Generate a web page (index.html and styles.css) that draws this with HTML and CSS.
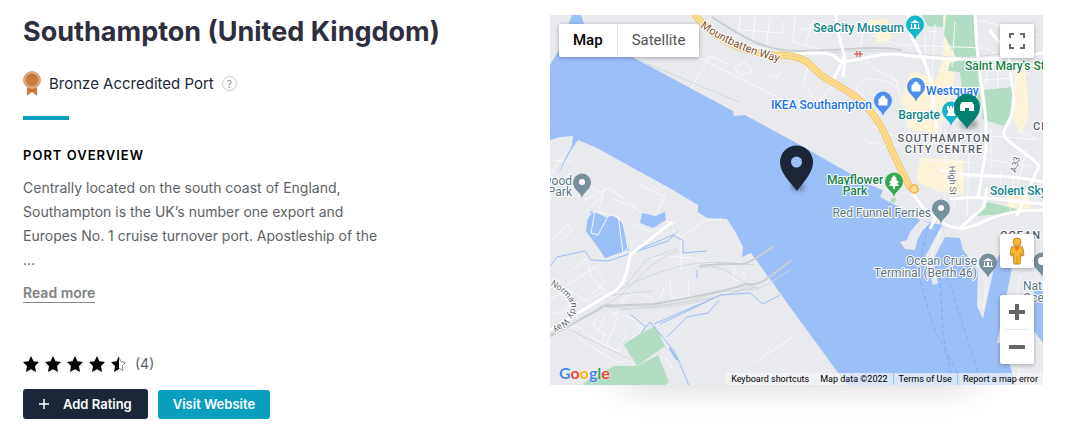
FILE: index.html
```html
<!DOCTYPE html>
<html lang="en">
  <head>
    <meta charset="UTF-8" />
    <meta name="viewport" content="width=device-width, initial-scale=1.0" />
    <title>Southampton (United Kingdom)</title>
    <link rel="stylesheet" href="styles.css">
  </head>
  <body>
    <main class="port">
      <section class="port-info">
        <h1>Southampton (United Kingdom)</h1>
        <div class="accreditation">
          <svg class="medal" viewBox="0 0 18 25" aria-hidden="true">
            <path d="M4 15h10v10l-5-4-5 4z" fill="#cd7f3f" />
            <path d="M4 17c3 2 7 2 10 0v2c-3 1-7 1-10 0z" fill="#b86a30" />
            <circle cx="9" cy="9" r="9" fill="#e0a578" />
            <circle cx="9" cy="9" r="6" fill="#cc7b3c" />
            <path d="M3 9a6 6 0 0 1 12 0a6.500 6.500 0 0 0-12 0" fill="#ba6d34" />
          </svg>
          <span>Bronze Accredited Port</span>
          <button type="button" class="help" aria-label="About accreditation">?</button>
        </div>
        <div class="divider"></div>
        <h2>Port overview</h2>
        <p class="overview">Centrally located on the south coast of England, Southampton is the UK’s number one export and Europes No. 1 cruise turnover port. Apostleship of the ...</p>
        <a class="read-more" href="#">Read more</a>

        <div class="rating">
          <svg class="star" viewBox="0 0 16 16"><path id="star" d="M8 0l2.500 5.200 5.500.8-4 4 1 6-5-2.800L3 16l1-6-4-4 5.500-.8z" /></svg>
          <svg class="star" viewBox="0 0 16 16"><use href="#star" /></svg>
          <svg class="star" viewBox="0 0 16 16"><use href="#star" /></svg>
          <svg class="star" viewBox="0 0 16 16"><use href="#star" /></svg>
          <svg class="star" viewBox="0 0 16 16">
            <path d="M8 0v13.200L3 16l1-6-4-4 5.500-.8z" />
            <path d="M8 1.500l2 4.300 4.600.8-3.400 3.200.8 4.700L8 12.300" fill="none" stroke="#888" />
          </svg>
          <span>(4)</span>
        </div>
        <div class="actions">
          <button type="button" class="btn btn-dark">
            <svg class="plus" viewBox="0 0 10 10" aria-hidden="true"><path d="M5 0v10M0 5h10" stroke="#fff" stroke-width="1.500" /></svg>
            Add Rating
          </button>
          <a class="btn btn-teal" href="#">Visit Website</a>
        </div>
      </section>

      <section class="map" aria-label="Map">
        <svg class="map-canvas" viewBox="550 15 493 370" preserveAspectRatio="xMidYMid slice">
          <defs>
            <path id="pin" d="M0 15C-1 9-9 7-9-0.500A9 9 0 0 1 9-0.500C9 7 1 9 0 15z" />
            <path id="bag" d="M-4-2h8v6h-8zM-2-2v-1a2 2 0 0 1 4 0v1" />
            <path id="museum" d="M-5-2L0-5 5-2zM-4-1h1v4h-1zM-1-1H1V3H-1zM3-1h1v4H3zM-5 3H5v1H-5z" />
            <path id="mountbatten" d="M700 27C725 44 746 54 790 65" />
            <path id="normandy" d="M550 285Q568 295 571 305Q572 316 552 329" />
          </defs>

          <rect class="land" x="550" y="15" width="493" height="370" />

          <!-- beige blocks -->
          <g class="block">
            <path d="M944 15h10l2 44-6 50-14 24-26-3-8-34 9-26 25 10 7-20z" />
            <path d="M868 20l20-1 4 20-14 4zM920 158l43 2 1 35-28-4-19-10z" />
            <path d="M1007 62l18 4 4 50-8 18-8-16 2-40zM1008 196l20-4 3 19-24-2z" />
          </g>

          <!-- parks -->
          <g class="park">
            <path d="M922 15h21v12l-15-1zM946 15h29l2 48 4 43-18-7-3-27-12-1 2-8 8-2-14-26z" />
            <path d="M984 90l29-3-3 28-6 11-22-7zM987 202l30 7-2 4-38 3 8-13z" />
            <path d="M623 343l32-17 10 20-28 20z" />
            <path d="M637 366l21-11 11 27-4 3h-82l3-4 28-15z" />
          </g>

          <!-- minor streets -->
          <g class="street">
            <path d="M738 37l3-22M742 30l40 3 2-12M740 43l43 10M755 15l-2 26M770 18l-4 28M640 58l25-20 50 28 80 40M690 90l20-34 18 8M735 67l10-5 8 9-14 5zM770 74l6 4 6-8M795 15l-2 27 40 11M800 30l25-5 22 8M805 46l8-26 38 14M810 63l-7 20 20 28M853 20l20 16 30 10M866 17l-6 30 8 18M835 82l-18 22 30 5M864 96l-8-7 11-11 21 4 12 7M887 70l10 12 10 40 8 27M870 66l28 16M868 92l12 6-4 20M890 28l50 4M925 34l1 40M935 24l-5 100M948 60l-8 76M955 22l-3 45M905 45l78 3M978 20l60 15M981 45l50 30M984 80l28-2M990 56l-5 30M998 60v27M982 135l55 5M991 128v40M925 142l66 10M920 160l54 3M923 175l50 3M945 128v88M957 140l-3 67M969 150l-2 66M978 158l52 8M1018 60l-4 40M1012 60l31 7M1017 130l26 12M1001 170l-2 28M1014 170l-4 40M1026 150l-14 58M862 138l10 6 9-2M878 151l10-8 12 3M870 125l27 12" />
            <path d="M550 175l14-20 10-10M553 160l20 2M563 193l20-13 20 15-18 17M585 200l23-12 30 20M605 187l-7 24 25 10M612 199l20 7 17 12M640 185l25 12-10 18 18 10M630 222l20 10 25-9M550 241l17-16 5 6-12 10M571 271l15-12 6 18M567 285l28-18 10 15-19 19-20-13M590 300l14-9-10-12" />
            <path d="M550 298l13-5 7 12-11 9-9-2M606 315l-8 15 7 4-4 10 18 7 8-19M608 310l10 7-12 28M614 312l22 8 5 12-17 12M600 333l-7-8 4-8M573 326c-6 6 17 20 42 35 7 4 15-2 10-5l-35-19c-8-4-9-12-17-11M665 358l9 12M755 363l38-27M670 278l1 20 18-1-1-18M660 300l4-12M622 300c12-12 28-3 31 0 5 14-33 9-31 0M736 268l-3 10c12 9 16-2 7-8M650 259l18-3 22 2 25 6" />
          </g>

          <!-- water -->
          <g class="water">
            <path d="M572 15L581 15L585 27L580 45L632 57L653 68L733 111L734 116L745 115L800 145L870 185L883 190L880 197L910 213L920 220L942 225L945 237L960 238L963 250L978 270L977 306L983 319L995 263L1001 252L1012 267L1007 293L997 343L1003 343L1016 385L847 385L790 307L780 293L751 253L742 257L743 247L736 233L727 219L707 218L698 212L698 205L673 190L597 148L578 140L571 150L557 176L562 165L572 145L573 136L560 137L550 140V65L559 50z" />
            <path d="M591 211l8 3 6 3 8-1 8 5 4 9 4 20-24 8-8-12-11-15 1-9zM642 213l13 3 10-4 1 8-13 8-13-5zM670 347l10 14-4-1-7-11z" />
            <path d="M1034 285h9v58l-9-12z" />
          </g>

          <!-- railways -->
          <g class="rail">
            <path d="M590 28l17 15M645 63l94 39M790 53c45 2 70-5 110-1 45 4 55 8 90 3l53-2M550 337l60-35M600 307c30-10 40-43 78-56M604 304c40 5 75 2 110-11 30-5 38 0 54-9l22-14M601 306c55 8 115-6 150-20M620 310c60-5 110-15 135-23M570 330l60 29M550 335c30-25 75-50 100-59 45-18 70-14 105-11M700 268c30-6 35 15 58 20M612 295l40-4M626 285l20-25 32-12" />
            <path class="rail-wide" d="M712 17c28 18 52 35 88 34 45 0 70-6 102-1M699 266c22-3 30-2 45-2q9-3 30-18M604 306l50-2q70-12 93-20c15 3 25-10 45-24M550 336l53-29" />
          </g>

          <g class="stream">
            <path d="M550 266l7-9 28-6 6 9 17 1 60-20 10-10M633 252l40-17 10 6v12l24-2M697 270v8M631 315l15 12-5 6 9-11 25 30 15 36 6 6 1 14M660 324l40-19 20-10 30-2 13 11 17-9M654 324l60-26M667 337l20-20 21-4 11-13" />
          </g>
          <path class="tile-seam" d="M550 120.500h200M815 337.500h182" />
          <path class="ferry" d="M928 226l-10 45 15 55 30 59M940 275l3 60 10 50M947 275l35 110" />

          <!-- piers -->
          <g class="land">
            <path d="M920 220l-10 12-3 8-7 2 5 7 10 1 2-9 5-10 8-8zM942 225l-17 32 8 28 5-2-6-21 13-25z" />
          </g>
          <path class="green-patch" d="M892 198l4 0-1 5-5-1z" />

          <!-- main roads -->
          <g class="road">
            <path d="M836 15c2 35 12 30 7 62M775 54c25 1 58-6 63 6 10 6 40-10 65-5 50 6 100 5 140-2M909 15c-3 15 5 25 14 44 10 20 10 45 14 70M975 15c2 70 13 80 11 135l-8 47M990 30c8 15 20 15 20 35s8 30 1 52l-7 14c-4 10 30 25 35 35l-22 50M940 170c30 9 70 3 103 12M950 199c40-4 60 3 93 5M911 191l12 17 22 16c30 15 35-15 98-14M960 228l24-21 3-20M936 217l-6 12M550 330l58-35c17-7 19-22 22-40l42-33M843 60l-10 21" />
          </g>
          <g class="street"><path d="M672 230l10 7 22-16 18-2M681 240v30M586 218l9-7-4 22 7 2 10-19M618 215l5 38 5-5-5-25-10-10M941 230l-10 26M988 270l-5 40M1020 275l-4 30 12 50M1014 345l8 40M1008 246l35 20" /></g>

          <!-- A33 -->
          <path class="highway-edge" d="M693 12c18 26 50 41 80 43 12 1 22-1 34 7 9 8 12 13 25 20 18 11 36 18 53 52 8 21 17 37 26 55" />
          <path class="highway" d="M693 12c18 26 50 41 80 43 12 1 22-1 34 7 9 8 12 13 25 20 18 11 36 18 53 52 8 21 17 37 26 55" />
          <path class="highway-line" d="M693 12c18 26 50 41 80 43 12 1 22-1 34 7 9 8 12 13 25 20 18 11 36 18 53 52 8 21 17 37 26 55" />
          <circle class="highway-ring" cx="914" cy="189" r="4" />
          <path class="station" d="M854 54h9M857 51v6M860 51v6" />

          <g class="pin-slate"><use href="#pin" x="582" y="183" /><use href="#pin" x="941" y="209" /><use href="#pin" x="988" y="263" /><use href="#pin" x="1042" y="262" /></g>
          <g class="pin-aqua"><use href="#pin" x="915" y="25" /><use href="#pin" x="951" y="111" /></g>
          <g class="pin-blue"><use href="#pin" x="883" y="101" /><use href="#pin" x="916" y="87" /></g>
          <use class="pin-green" href="#pin" x="894" y="182" />
          <g fill="#fff">
            <circle cx="582" cy="182" r="3" /><circle cx="941" cy="208" r="3" /><circle cx="1042" cy="261" r="4" />
            <use href="#museum" x="988" y="263" /><use href="#museum" x="915" y="25" />
            <path d="M894 175l3 4h-1l3 4h-2l2 3h-4v3h-2v-3h-4l2-3h-2l3-4h-1z" />
            <path d="M947 106h2v2h1v-2h2v2h1v-2h2v4h-1v3l2 3h-10l2-3v-3h-1z" />
          </g>
          <g class="bag">
            <use href="#bag" x="883" y="101" /><use href="#bag" x="916" y="87" />
          </g>

          <g class="labels">
            <text class="brown"><textPath href="#mountbatten">Mountbatten Way</textPath></text>
            <text class="road-name"><textPath href="#normandy">Normandy Way</textPath></text>
            <text class="teal" x="904" y="32" text-anchor="end">SeaCity Museum</text>
            <text class="green" x="965" y="70">Saint Mary's St</text>
            <text class="blue" x="872" y="109" text-anchor="end">IKEA Southampton</text>
            <text class="blue" x="926" y="95">Westquay</text>
            <text class="teal" x="940" y="119" text-anchor="end">Bargate</text>
            <text class="area" x="944" y="142" text-anchor="middle">SOUTHAMPTON</text>
            <text class="area" x="944" y="153" text-anchor="middle">CITY CENTRE</text>
            <text class="area" x="1033" y="130">CH</text>
            <text class="area" x="1000" y="239">OCEAN</text>
            <text class="green" x="855" y="184" text-anchor="middle">Mayflower</text>
            <text class="green" x="855" y="195" text-anchor="middle">Park</text>
            <text class="slate" x="931" y="217" text-anchor="end">Red Funnel Ferries</text>
            <text class="slate" x="977" y="265" text-anchor="end">Ocean Cruise</text>
            <text class="slate" x="977" y="277" text-anchor="end">Terminal (Berth 46)</text>
            <text class="slate" x="572" y="185" text-anchor="end">wood</text>
            <text class="slate" x="572" y="196" text-anchor="end">Park</text>
            <text class="slate" x="1023" y="290">Nati</text>
            <text class="slate" x="1023" y="302">Oce</text>
            <text class="teal" x="990" y="195">Solent Sky</text>
            <text class="road-name" transform="translate(949 166) rotate(88)">High St</text>
            <text class="road-name" transform="translate(1016 173) rotate(-75)">A33</text>
          </g>

          <g class="marker-shadow">
            <ellipse cx="798" cy="187" rx="7" ry="4" /><ellipse cx="969" cy="124" rx="9" ry="5" />
          </g>
          <path fill="#00806f" d="M967 129c-2-6-13-11-13-22a13 13 0 0 1 26 0c0 11-11 16-13 22z" />
          <path fill="#fff" d="M960 111v-6l2-3h10l2 3v6h-5v-3h-4v3z" />
          <path fill="#1b2739" fill-rule="evenodd" d="M797 191c-4-6-17-17-17-29a16.500 16.500 0 0 1 33 0c0 12-12 23-16 29zM796.500 156.500a5.500 5.500 0 1 0 0 11a5.500 5.500 0 0 0 0-11z" />
        </svg>

        <div class="map-types">
          <button type="button" class="active">Map</button>
          <button type="button">Satellite</button>
        </div>
        <button type="button" class="control fullscreen" aria-label="Toggle fullscreen view">
          <svg width="16" height="16" viewBox="0 0 16 16"><path d="M1 5V1h4M11 1h4v4M15 11v4h-4M5 15H1v-4" fill="none" stroke="#666" stroke-width="2" /></svg>
        </button>
        <div class="side-controls">
          <button type="button" class="control" aria-label="Street View">
            <svg width="16" height="28" viewBox="0 0 16 28">
              <path d="M5 9h6q3 0 3 3l1 6-2 1-1-3-1 11H5L4 16l-1 3-2-1 1-6q0-3 3-3z" fill="#fcb72b" stroke="#b98a4a" />
              <circle cx="8" cy="5" r="4" fill="#fcb72b" stroke="#b98a4a" />
              <path d="M5 10l3 4 3-4z" fill="#ef7d22" />
              <path d="M8 19v8" fill="none" stroke="#d88a20" />
            </svg>
          </button>
          <div class="zoom">
            <button type="button" aria-label="Zoom in"><svg width="16" height="16" viewBox="0 0 16 16"><path d="M8 0v16M0 8h16" stroke="#666" stroke-width="4" /></svg></button>
            <button type="button" aria-label="Zoom out"><svg width="16" height="16" viewBox="0 0 16 16"><path d="M0 8h16" stroke="#666" stroke-width="4" /></svg></button>
          </div>
        </div>
        <a class="google" href="#"><span class="g-blue">G</span><span class="g-red">o</span><span class="g-yellow">o</span><span class="g-blue">g</span><span class="g-green">l</span><span class="g-red">e</span></a>
        <div class="attribution">
          <button type="button">Keyboard shortcuts</button>
          <span>Map data ©2022</span>
          <a href="#">Terms of Use</a>
          <a href="#">Report a map error</a>
        </div>
      </section>
    </main>
  </body>
</html>
```

FILE: styles.css
```css
* {
  box-sizing: border-box;
}

body {
  margin: 0;
  background-color: #ffffff;
  font-family: Inter, sans-serif;
  color: #5c6264;
}

button {
  margin: 0;
  padding: 0;
  border: none;
  background: none;
  font-family: inherit;
  cursor: pointer;
}

a {
  color: inherit;
  text-decoration: none;
}

svg {
  display: block;
}

.port {
  display: grid;
  grid-template-columns: 1fr 1fr;
  gap: 34px;
  padding: 15px 22px 22px 23px;
}

h1 {
  margin: 0;
  font-size: 27px;
  line-height: 34px;
  font-weight: 700;
  color: #2e2e3e;
}

.accreditation {
  display: flex;
  align-items: center;
  gap: 8px;
  margin-top: 22px;
  font-size: 15px;
  line-height: 25px;
  color: #1b2739;
}

.medal {
  width: 18px;
  height: 25px;
}

.help {
  width: 15px;
  height: 15px;
  border: 1px solid #cccccc;
  border-radius: 50%;
  color: #888888;
  font-size: 10px;
  line-height: 12px;
}

.divider {
  width: 46px;
  height: 4px;
  margin-top: 20px;
  background-color: #0a9fbf;
}

h2 {
  margin: 25px 0 0;
  font-size: 13px;
  line-height: 20px;
  font-weight: 600;
  letter-spacing: 1px;
  text-transform: uppercase;
  color: #000000;
}

.overview {
  max-width: 370px;
  margin: 11px 0 10px;
  font-size: 14px;
  line-height: 24px;
}

.read-more {
  display: inline-block;
  border-bottom: 1px solid #888888;
  font-size: 14px;
  line-height: 18px;
  font-weight: 600;
  color: #808080;
}

.rating {
  display: flex;
  align-items: center;
  gap: 6px;
  margin-top: 51px;
  font-size: 14px;
  line-height: 20px;
}

.rating span {
  margin-left: 2px;
}

.star {
  width: 16px;
  height: 16px;
}

.actions {
  display: flex;
  align-items: flex-end;
  gap: 10px;
  margin-top: 15px;
}

.btn {
  display: flex;
  align-items: center;
  padding: 0 15px;
  border-radius: 3px;
  color: #ffffff;
  font-size: 13px;
  line-height: 29px;
  font-weight: 600;
}

.btn-dark {
  gap: 14px;
  padding: 0 16px;
  line-height: 30px;
  background-color: #1b2739;
}

.btn-teal {
  background-color: #0a9fbf;
}

.plus {
  width: 10px;
  height: 10px;
}

/* map */
.map {
  position: relative;
  height: 370px;
  font-family: Roboto, sans-serif;
  box-shadow: 0 60px 40px -70px rgba(0, 0, 0, 0.3);
}

.map-canvas {
  width: 100%;
  height: 100%;
}

.land {
  fill: #e8eaed;
}

.block {
  fill: #fdf3d6;
}

.park,
.green-patch {
  fill: #b1dec2;
}

.water {
  fill: #9bbff7;
}

.street,
.road,
.rail,
.stream,
.ferry,
.tile-seam,
.highway,
.highway-edge,
.highway-line {
  fill: none;
  stroke-linejoin: round;
}

.street {
  stroke: #f8f9fa;
  stroke-width: 1;
}

.road {
  stroke: #ffffff;
  stroke-width: 3;
}

.rail {
  stroke: #d5d8db;
  stroke-width: 1;
}

.rail-wide {
  stroke: #cccfd2;
  stroke-width: 2;
}

.stream {
  stroke: #9bbff7;
  stroke-width: 1;
}

.tile-seam {
  stroke: #a1c3f7;
}

.ferry {
  stroke: #7fadf5;
  stroke-dasharray: 5 3;
}

.highway-edge {
  stroke: #f8c569;
  stroke-width: 7;
}

.highway {
  stroke: #fedf91;
  stroke-width: 5;
}

.highway-line {
  stroke: #f9cc77;
}

.highway-ring {
  fill: #fedf91;
  stroke: #f5bd5c;
  stroke-width: 2;
}

.station {
  stroke: #d9453d;
  stroke-width: 1;
}

.pin-slate {
  fill: #78909c;
}

.pin-aqua {
  fill: #12b5cb;
}

.pin-blue {
  fill: #4f8ff0;
}

.pin-green {
  fill: #34a853;
}

.bag {
  fill: #ffffff;
  stroke: #ffffff;
  stroke-width: 1;
}

.marker-shadow {
  fill: rgba(0, 0, 0, 0.3);
  filter: blur(2px);
}

.labels text {
  font-size: 12px;
  font-weight: 500;
  paint-order: stroke;
  stroke: #ffffff;
  stroke-width: 2px;
  stroke-linejoin: round;
}

.labels .teal {
  fill: #12858d;
}

.labels .green {
  fill: #188048;
}

.labels .blue {
  fill: #1a73e8;
}

.labels .slate {
  fill: #5c7783;
  font-weight: 400;
}

.labels .brown {
  fill: #7c5132;
  font-size: 11px;
  font-weight: 400;
}

.labels .area {
  fill: #555b61;
  font-size: 11px;
  letter-spacing: 1px;
}

.labels .road-name {
  fill: #666b70;
  font-size: 9px;
  font-weight: 400;
}

.map-types,
.control,
.zoom {
  background-color: #ffffff;
  border-radius: 2px;
  box-shadow: 0 1px 4px rgba(0, 0, 0, 0.3);
}

.map-types {
  position: absolute;
  top: 9px;
  left: 9px;
  display: flex;
}

.map-types button {
  padding: 0 14px;
  color: #565656;
  font-size: 15px;
  line-height: 33px;
}

.map-types .active {
  border-right: 1px solid #e6e6e6;
  color: #000000;
  font-weight: 500;
}

.control {
  display: flex;
  align-items: center;
  justify-content: center;
  width: 34px;
  height: 34px;
}

.fullscreen {
  position: absolute;
  top: 9px;
  right: 9px;
}

.side-controls {
  position: absolute;
  right: 9px;
  bottom: 21px;
  display: grid;
  gap: 27px;
}

.zoom {
  padding: 0 5px;
}

.zoom button {
  display: flex;
  align-items: center;
  justify-content: center;
  width: 24px;
  height: 34px;
}

.zoom button + button {
  height: 35px;
  border-top: 1px solid #e6e6e6;
}

.google {
  position: absolute;
  left: 9px;
  bottom: 0;
  font-family: Lato, sans-serif;
  font-size: 16px;
  line-height: 24px;
  font-weight: 700;
  text-shadow: 0 0 2px #ffffff;
}

.g-blue {
  color: #4285f4;
}

.g-red {
  color: #ea4335;
}

.g-yellow {
  color: #fbbc05;
}

.g-green {
  color: #34a853;
}

.attribution {
  position: absolute;
  right: 0;
  bottom: 0;
  display: flex;
  gap: 1px;
}

.attribution > * {
  padding: 0 5px;
  background-color: rgba(245, 245, 245, 0.7);
  color: #000000;
  font-size: 9px;
  line-height: 12px;
}
```
